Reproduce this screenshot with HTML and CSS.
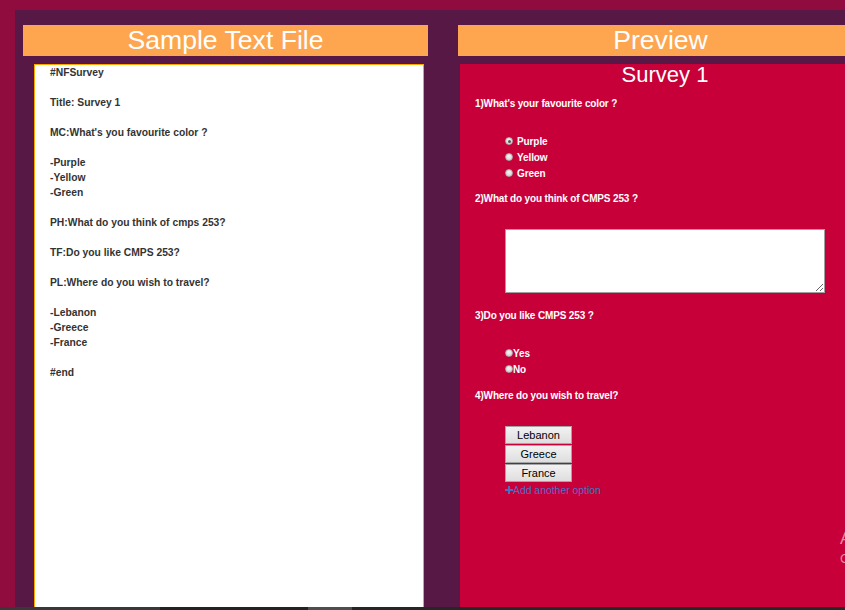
FILE: index.html
```html
<!DOCTYPE html>
<html>
<head>
<meta charset="utf-8">
<title>Survey</title>
<link rel="stylesheet" href="styles.css">
</head>
<body>
<div class="app">
  <section class="col">
    <h1 class="bar">Sample Text File</h1>
    <div class="source">#NFSurvey

Title: Survey 1

MC:What's you favourite color ?

-Purple
-Yellow
-Green

PH:What do you think of cmps 253?

TF:Do you like CMPS 253?

PL:Where do you wish to travel?

-Lebanon
-Greece
-France

#end</div>
  </section>
  <section class="col">
    <h1 class="bar">Preview</h1>
    <div class="preview">
      <h2 class="title">Survey 1</h2>
      <p class="q q1">1)What's your favourite color ?</p>
      <div class="opts">
        <label class="opt"><span class="radio checked"></span>Purple</label>
        <label class="opt"><span class="radio"></span>Yellow</label>
        <label class="opt"><span class="radio"></span>Green</label>
      </div>
      <p class="q q2">2)What do you think of CMPS 253 ?</p>
      <textarea class="answer"></textarea>
      <p class="q q3">3)Do you like CMPS 253 ?</p>
      <div class="opts tf">
        <label class="opt tight"><span class="radio"></span>Yes</label>
        <label class="opt tight"><span class="radio"></span>No</label>
      </div>
      <p class="q q4">4)Where do you wish to travel?</p>
      <div class="btns">
        <button class="pick">Lebanon</button>
        <button class="pick">Greece</button>
        <button class="pick">France</button>
      </div>
      <a class="add" href="#"><svg class="plus" width="8" height="8" viewBox="0 0 8 8"><path d="M3 0h2v3h3v2H5v3H3V5H0V3h3z" fill="currentColor"/></svg>Add another option</a>
    </div>
  </section>
</div>
<div class="taskbar"><span class="s1"></span><span class="s2"></span><span class="s3"></span><span class="s4"></span></div>
<div class="watermark"><div class="w1">Activate Windows</div><div class="w2">Go to Settings to activate Windows.</div></div>
</body>
</html>
```

FILE: styles.css
```css
html, body {
  margin: 0;
  padding: 0;
}
body {
  width: 845px;
  height: 610px;
  overflow: hidden;
  background: #900c3f;
  font-family: "Liberation Sans", Arial, sans-serif;
  position: relative;
}
.app {
  margin: 10px 0 0 15px;
  height: 597px;
  box-sizing: border-box;
  background: #581845;
  padding: 15px 0 0 8px;
  display: flex;
  gap: 30px;
  width: 900px;
}
.col {
  flex: none;
  width: 405px;
  display: flex;
  flex-direction: column;
}
.bar {
  margin: 0;
  height: 31px;
  line-height: 31px;
  background: #fda64f;
  color: #fff;
  font-weight: normal;
  font-size: 26.6px;
  text-align: center;
}
.source {
  margin: 8px 0 0 11px;
  width: 390px;
  box-sizing: border-box;
  flex: 1;
  background: #fff;
  border: 1px solid #ffa500;
  border-bottom: none;
  padding: 0 15px;
  white-space: pre;
  font-size: 10.3px;
  font-weight: bold;
  line-height: 15px;
  color: #333;
}
.preview {
  margin: 8px 0 0 2px;
  width: 410px;
  flex: 1;
  background: #c70039;
  color: #fff;
  display: flex;
  flex-direction: column;
  align-items: flex-start;
}
.title {
  margin: 0;
  align-self: stretch;
  text-align: center;
  font-weight: normal;
  font-size: 22px;
  line-height: 22px;
}
.q {
  margin: 0;
  padding-left: 15px;
  font-size: 10px;
  font-weight: bold;
  letter-spacing: -0.15px;
  line-height: 14px;
}
.q1 { margin-top: 11px; }
.q2 { margin-top: 11px; }
.q3 { margin-top: 16px; }
.q4 { margin-top: 12px; }
.opts {
  margin-top: 22px;
  padding-left: 45px;
  display: flex;
  flex-direction: column;
}
.opt {
  display: flex;
  align-items: center;
  height: 16px;
  font-size: 10px;
  font-weight: bold;
  letter-spacing: -0.1px;
  gap: 4px;
}
.opt.tight { gap: 0; }
.radio {
  width: 8px;
  height: 8px;
  border-radius: 50%;
  box-sizing: border-box;
  border: 1px solid #a9a9a9;
  background: radial-gradient(circle at 50% 35%, #f4f4f4, #d0d0d0);
  position: relative;
}
.radio.checked::after {
  content: "";
  position: absolute;
  left: 1.5px;
  top: 1.5px;
  width: 3px;
  height: 3px;
  border-radius: 50%;
  background: #555;
}
.answer {
  margin: 23px 0 0 45px;
  width: 320px;
  height: 64px;
  box-sizing: border-box;
  border: 1px solid #a0a0a0;
  background: #fff;
  padding: 2px;
}
.btns {
  margin: 23px 0 0 45px;
  display: flex;
  flex-direction: column;
  gap: 1px;
}
.pick {
  width: 67px;
  height: 18px;
  box-sizing: border-box;
  margin: 0;
  padding: 0;
  border: 1px solid #a5a5a5;
  background: linear-gradient(#f2f2f2, #dedede);
  color: #000;
  font-family: "Liberation Sans", Arial, sans-serif;
  font-size: 11px;
  line-height: 16px;
}
.add {
  margin: 1px 0 0 45px;
  display: flex;
  align-items: center;
  height: 14px;
  color: #4a70c4;
  text-decoration: none;
  font-size: 10.4px;
}
.plus {
  margin-right: 0;
}
.taskbar {
  display: flex;
  height: 3px;
}
.taskbar span { height: 3px; }
.s1 { width: 160px; background: #383838; }
.s2 { width: 148px; background: #232323; }
.s3 { width: 44px; background: #4e4e4e; }
.s4 { flex: 1; background: #262626; }
.watermark {
  position: absolute;
  left: 840px;
  top: 529px;
  color: rgba(255, 255, 255, 0.55);
  white-space: nowrap;
}
.w1 { font-size: 17px; line-height: 20px; }
.w2 { font-size: 13px; line-height: 20px; }
```
